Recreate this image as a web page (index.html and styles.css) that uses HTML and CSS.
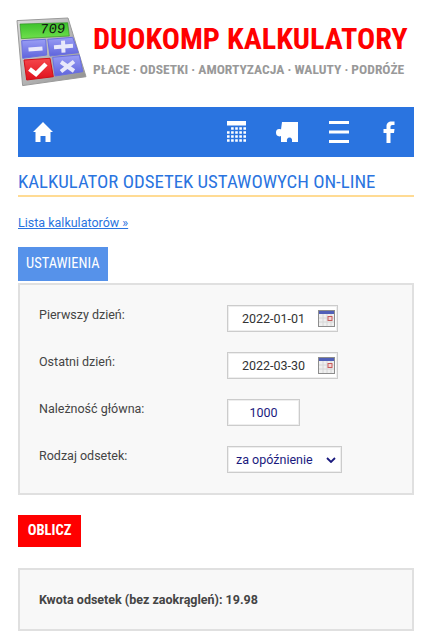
FILE: index.html
```html
<!DOCTYPE html>
<html lang="pl">
<head>
<meta charset="utf-8">
<title>Kalkulator odsetek ustawowych on-line</title>
<link rel="stylesheet" href="styles.css">
</head>
<body>
<div class="page">
  <header class="brand">
    <svg class="logo" width="70" height="70" viewBox="0 0 70 70">
      <defs>
        <linearGradient id="gb" x1="0" y1="0" x2="0" y2="1"><stop offset="0" stop-color="#9a9ef5"/><stop offset="1" stop-color="#5f64dc"/></linearGradient>
        <linearGradient id="gr" x1="0" y1="0" x2="0" y2="1"><stop offset="0" stop-color="#f5474c"/><stop offset="1" stop-color="#e0101c"/></linearGradient>
        <linearGradient id="gg" x1="0" y1="0" x2="0" y2="1"><stop offset="0" stop-color="#3cc02c"/><stop offset="1" stop-color="#6fe04c"/></linearGradient>
        <linearGradient id="gs" x1="0" y1="0" x2="1" y2="1"><stop offset="0" stop-color="#dcdcdc"/><stop offset="1" stop-color="#8f8f8f"/></linearGradient>
      </defs>
      <path d="M-1 2.600 L50 0 L68 58.700 L4.600 67.600 Z" fill="url(#gs)" stroke="#9a9a9a" stroke-width="1" stroke-linejoin="round"/>
      <path d="M2 6 L49.700 4.700 L51.300 18 L3.300 20.700 Z" fill="url(#gg)" stroke="#2d8a20" stroke-width=".6" stroke-linejoin="round"/>
      <text class="logo-num" x="24" y="15.500" transform="rotate(-2 24 15) skewX(-8)">709</text>
      <path d="M3.700 22.700 L27.700 21.300 L28.700 37 L4.700 40.300 Z" fill="url(#gb)" stroke-linejoin="round" stroke="#6a6fe0"/>
      <path d="M29.700 21.300 L54.700 19.300 L60.300 34.700 L32 38 Z" fill="url(#gb)" stroke-linejoin="round" stroke="#6a6fe0"/>
      <path d="M6 42 L32 40.300 L35.300 58.700 L8.700 62 Z" fill="url(#gr)" stroke-linejoin="round" stroke="#d01018"/>
      <path d="M34.700 39.300 L61.300 37 L64.700 53.700 L37 58 Z" fill="url(#gb)" stroke-linejoin="round" stroke="#6a6fe0"/>
      <path d="M10.500 31.500 L24.500 30.500" stroke="#e8e8fa" stroke-width="4" fill="none"/>
      <path d="M36 29.200 L55 27.800 M45 22.700 L45.500 34.700" stroke="#e8e8fa" stroke-width="4" fill="none"/>
      <path d="M11.500 51 L18 56 L28 46" stroke="#fff" stroke-width="4.500" fill="none"/>
      <path d="M43 44 L56 53 M56 43.500 L43 53.500" stroke="#e8e8fa" stroke-width="4" fill="none"/>
    </svg>
    <div class="brand-text">
      <div class="brand-name">DUOKOMP KALKULATORY</div>
      <div class="brand-sub">PŁACE · ODSETKI · AMORTYZACJA · WALUTY · PODRÓŻE</div>
    </div>
  </header>

  <nav class="nav">
    <svg class="nav-icon" width="22" height="22" viewBox="0 0 22 22"><path d="M11 1 L21 11 L18.500 11 L18.500 21 L13.500 21 L13.500 15 L8.500 15 L8.500 21 L3.500 21 L3.500 11 L1 11 Z" fill="#fff"/></svg>
    <span class="nav-spacer"></span>
    <svg class="nav-icon" width="19" height="22" viewBox="0 0 19 22">
      <rect x="0" y="0" width="19" height="4.500" fill="#fff"/>
      <path d="M4.100 7.500H19M0 11.500H19M0 15.500H19M0 19.500H19" stroke="#fff" stroke-width="2.500" stroke-dasharray="2.600 1.500"/>
    </svg>
    <svg class="nav-icon" width="23" height="22" viewBox="0 0 23 22"><path d="M6 1 H22 V21 H16 C16.500 18 15.500 16.500 13.500 16.500 C11.500 16.500 10.500 18 11 21 H5 V15 C4 15.500 3 15.500 2 15 C0.500 14.500 0 13 0 11.500 C0 9.500 1 8 3 8 C4 8 4.500 8 5 8.500 Z" fill="#fff"/></svg>
    <svg class="nav-icon" width="20" height="22" viewBox="0 0 20 22"><path d="M0 0H20V3H0ZM0 9.500H20V12.500H0ZM0 19H20V22H0Z" fill="#fff"/></svg>
    <svg class="nav-icon nav-fb" width="12" height="22" viewBox="0 0 12 22"><path d="M3.500 22 V12 H0.500 V8 H3.500 V5.500 C3.500 2 5.500 0.500 8.500 0.500 H11.500 V4 H9.500 C8 4 7.500 4.700 7.500 6 V8 H11.500 L11 12 H7.500 V22 Z" fill="#fff"/></svg>
  </nav>

  <h1 class="title">KALKULATOR ODSETEK USTAWOWYCH ON-LINE</h1>

  <p class="list-link"><a href="#">Lista kalkulatorów »</a></p>

  <div class="tab">USTAWIENIA</div>
  <form class="panel">
    <div class="row">
      <label class="lbl">Pierwszy dzień:</label>
      <div class="field date"><span class="val">2022-01-01</span>
        <svg class="cal" width="17" height="17" viewBox="0 0 17 17"><rect x=".5" y=".5" width="16" height="16" fill="#efefef" stroke="#8d8d8d"/><rect x="1" y="1" width="15" height="3" fill="#5160b8"/><path d="M1 8H16M1 12H16M5 4V16M9 4V16M13 4V16" stroke="#d6d6d6"/><rect x="10" y="6.500" width="4" height="4" fill="#f3d6d6" stroke="#c85a5a"/></svg>
      </div>
    </div>
    <div class="row">
      <label class="lbl">Ostatni dzień:</label>
      <div class="field date"><span class="val">2022-03-30</span>
        <svg class="cal" width="17" height="17" viewBox="0 0 17 17"><rect x=".5" y=".5" width="16" height="16" fill="#efefef" stroke="#8d8d8d"/><rect x="1" y="1" width="15" height="3" fill="#5160b8"/><path d="M1 8H16M1 12H16M5 4V16M9 4V16M13 4V16" stroke="#d6d6d6"/><rect x="10" y="6.500" width="4" height="4" fill="#f3d6d6" stroke="#c85a5a"/></svg>
      </div>
    </div>
    <div class="row">
      <label class="lbl">Należność główna:</label>
      <div class="field amount">1000</div>
    </div>
    <div class="row">
      <label class="lbl">Rodzaj odsetek:</label>
      <div class="field kind">za opóźnienie
        <svg class="chev" width="10" height="6" viewBox="0 0 10 6"><path d="M1 1 L5 5 L9 1" fill="none" stroke="#1a1a7e" stroke-width="1.800"/></svg>
      </div>
    </div>
  </form>

  <button class="calc" type="button">OBLICZ</button>

  <div class="result">Kwota odsetek (bez zaokrągleń): 19.98</div>
</div>
</body>
</html>
```

FILE: styles.css
```css
* { box-sizing: border-box; }
html, body { margin: 0; padding: 0; background: #fff; }
body { font-family: Roboto, "Liberation Sans", sans-serif; color: #444; font-size: 12.500px; height: 642px; overflow: hidden; }
.page { padding: 18px 18px 0; width: 432px; }

.brand { display: flex; align-items: flex-start; height: 89px; }
.logo { flex: none; margin-right: 5px; overflow: visible; }
.logo-num { font-family: "Liberation Mono", monospace; font-size: 14px; fill: #111; font-weight: 400; }
.brand-text { padding-top: 4px; }
.brand-name { font-size: 30.200px; line-height: 34px; font-weight: 700; color: #ff0000; white-space: nowrap; font-stretch: 75%; }
.brand-sub { margin-top: 6px; font-size: 13.550px; line-height: 15px; font-weight: 700; color: #999; white-space: nowrap; font-stretch: 75%; }

.nav { display: flex; align-items: center; height: 50px; background: #2a74e0; padding: 0 19px 0 14px; gap: 30px; }
.nav-spacer { flex: 1; }
.nav-fb { margin-left: 4px; }

.title { margin: 13px 0 0; font-size: 18.800px; line-height: 24px; font-weight: 400; color: #2a74e0; border-bottom: 2px solid #ffdb94; height: 27px; white-space: nowrap; font-stretch: 75%; }

.list-link { margin: 18px 0 0; font-size: 12.500px; line-height: 16px; }
.list-link a { color: #2a74e0; }

.tab { margin-top: 16px; display: inline-block; height: 34px; line-height: 34px; padding: 0 8px; background: #5692ea; color: #fff; font-size: 14.500px; vertical-align: top; font-stretch: 75%; }

.panel { background: #f8f8f8; border: 2px solid #e0e0e0; height: 212px; padding: 7px 19px 0; margin-top: 2px; }
.row { display: flex; align-items: flex-start; height: 47px; padding-top: 13px; }
.lbl { width: 188px; flex: none; font-size: 12.500px; line-height: 18px; color: #444; margin-top: 1px; }

.field { height: 27px; background: #fff; border: 1px solid #ccc; box-shadow: inset 0 0 0 1px #eee; font-size: 12.500px; line-height: 25px; color: #1a1a7e; display: flex; align-items: center; }
.date { width: 111px; padding-left: 14px; color: #333; }
.val { flex: 1; }
.cal { margin-right: 2px; }
.amount { width: 73px; justify-content: center; }
.kind { width: 115px; padding-left: 8px; justify-content: space-between; padding-right: 5px; }

.calc { display: block; margin-top: 20px; width: 63px; height: 32px; background: #ff0000; border: 0; padding: 0; color: #fff; font: 700 14.500px/32px Roboto, sans-serif; font-stretch: 75%; }

.result { margin-top: 21px; background: #f8f8f8; border: 2px solid #e0e0e0; height: 63px; padding: 0 19px; line-height: 59px; font-size: 12.500px; font-weight: 700; color: #444; }
```
